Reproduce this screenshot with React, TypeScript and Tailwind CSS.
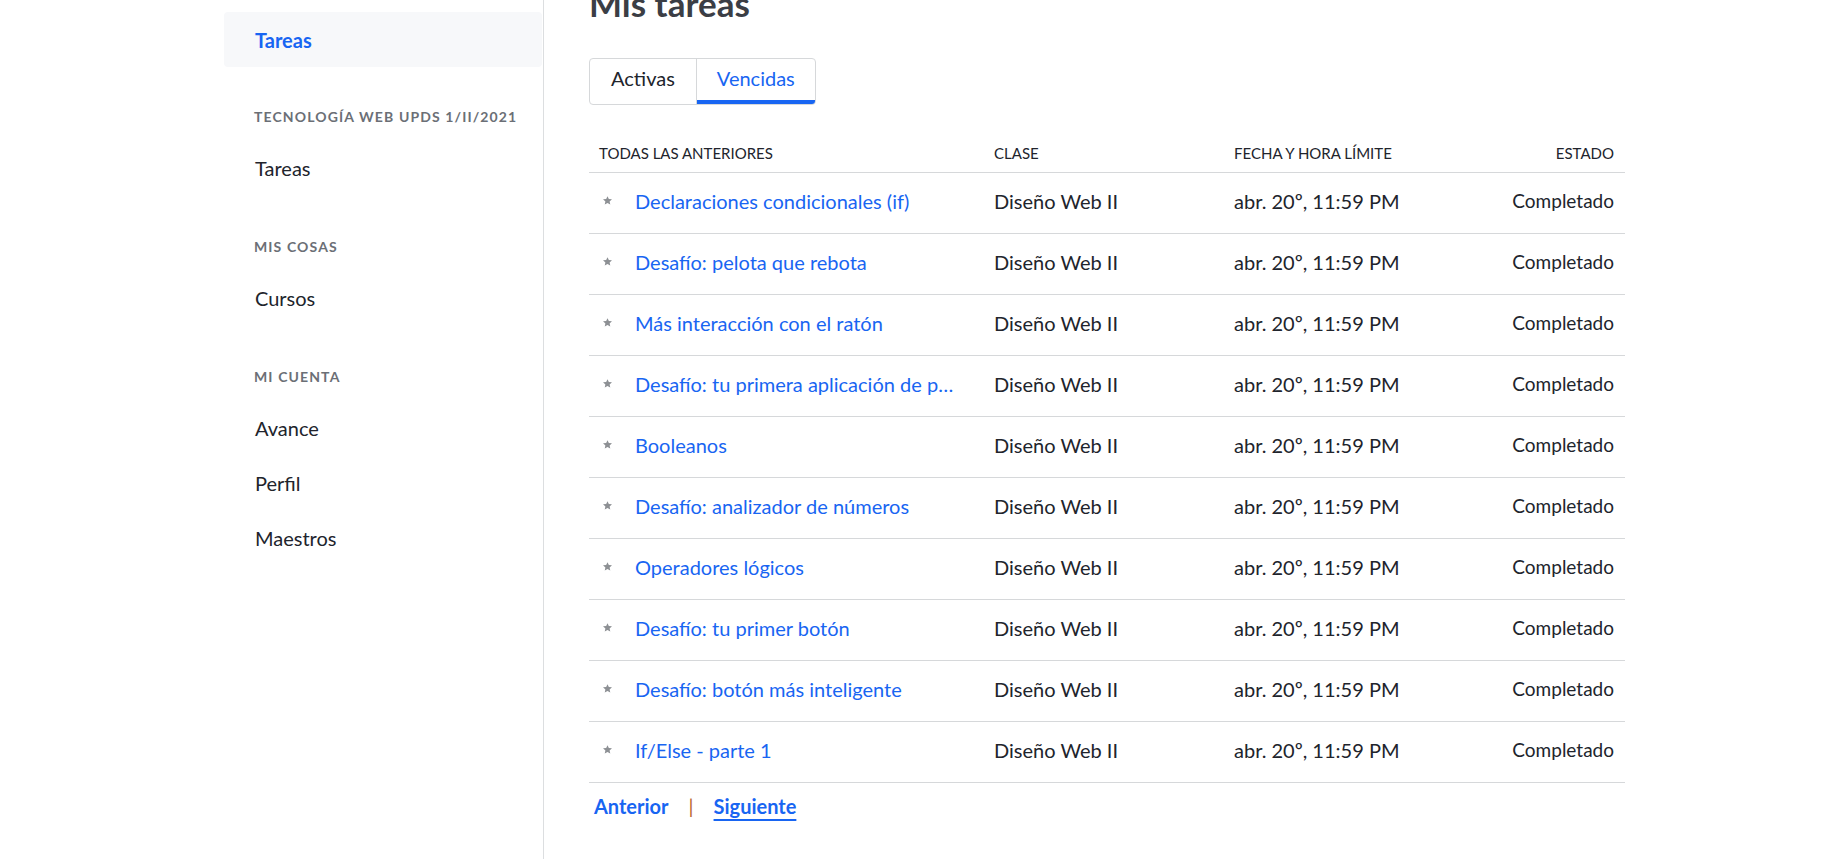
import React from "react";

const tasks = [
  "Declaraciones condicionales (if)",
  "Desafío: pelota que rebota",
  "Más interacción con el ratón",
  "Desafío: tu primera aplicación de pintura",
  "Booleanos",
  "Desafío: analizador de números",
  "Operadores lógicos",
  "Desafío: tu primer botón",
  "Desafío: botón más inteligente",
  "If/Else - parte 1",
];

const Star = () => (
  <svg width="11" height="11" viewBox="0 0 24 24" className="shrink-0">
    <path
      d="M12 2.5l2.9 6.3 6.9.7-5.2 4.6 1.5 6.8L12 17.4l-6.1 3.5 1.5-6.8-5.2-4.6 6.9-.7z"
      fill="#8d9094"
    />
  </svg>
);

const SectionHeader = ({ children }: { children: React.ReactNode }) => (
  <div className="mt-[43px] mb-[16px] h-[16px] flex items-center pl-[30px] text-[14px] font-bold tracking-[0.08em] text-[#6b6f76] uppercase">
    {children}
  </div>
);

const NavItem = ({ children, active = false }: { children: React.ReactNode; active?: boolean }) => (
  <div
    className={`h-[55px] flex items-center pl-[31px] text-[20px] rounded-[4px] ${
      active ? "bg-[#f7f8fa] text-[#1865f2] font-bold" : "text-[#21242c]"
    }`}
  >
    {children}
  </div>
);

export default function App() {
  return (
    <div
      className="w-full h-[859px] overflow-hidden bg-white flex text-[#21242c]"
      style={{ fontFamily: "Lato, 'Open Sans', sans-serif" }}
    >
      {/* Sidebar */}
      <aside className="w-[544px] shrink-0 border-r border-[#dcdee0] pl-[224px] pr-[1px]">
        <div className="mt-[12px] mb-[-2px]">
          <NavItem active>Tareas</NavItem>
        </div>
        <SectionHeader>Tecnología Web UPDS 1/II/2021</SectionHeader>
        <NavItem>Tareas</NavItem>
        <SectionHeader>Mis cosas</SectionHeader>
        <NavItem>Cursos</NavItem>
        <SectionHeader>Mi cuenta</SectionHeader>
        <NavItem>Avance</NavItem>
        <NavItem>Perfil</NavItem>
        <NavItem>Maestros</NavItem>
      </aside>

      {/* Main */}
      <main className="flex-1 pl-[45px]">
        <h1 className="-mt-[18px] text-[35px] leading-[43px] font-bold text-[#3b3e45]">Mis tareas</h1>

        <div className="mt-[33px] inline-flex h-[47px] border border-[#d6d8da] rounded-[4px] overflow-hidden">
          <div className="h-full flex items-center px-[21px] pb-[7px] text-[20px] text-[#21242c] border-r border-[#d6d8da]">
            Activas
          </div>
          <div className="h-full flex items-center px-[20px] pb-[3px] text-[20px] text-[#1865f2] border-b-[4px] border-b-[#1865f2]">
            Vencidas
          </div>
        </div>

        <div className="mt-[40px] w-[1036px]">
          <div className="grid grid-cols-[395px_240px_1fr_auto] pb-[11px] border-b border-[#d6d8da] text-[15px] leading-[16px] text-[#21242c] uppercase">
            <div className="pl-[10px]">Todas las anteriores</div>
            <div className="pl-[10px]">Clase</div>
            <div className="pl-[10px]">Fecha y hora límite</div>
            <div className="pr-[11px] text-right">Estado</div>
          </div>

          {tasks.map((t) => (
            <div
              key={t}
              className="grid grid-cols-[395px_240px_1fr_auto] h-[61px] items-center border-b border-[#d6d8da] text-[20px] leading-[30px] pb-[5px]"
            >
              <div className="flex items-center pl-[13px] gap-[22px] pr-[29px] min-w-0">
                <Star />
                <span className="text-[#1865f2] truncate">{t}</span>
              </div>
              <div className="pl-[10px]">Diseño Web II</div>
              <div className="pl-[10px]">abr. 20º, 11:59 PM</div>
              <div className="pr-[11px] text-right text-[19px] leading-[30px]">Completado</div>
            </div>
          ))}

          <div className="flex items-center mt-[8px] text-[20px] font-bold">
            <span className="pl-[5px] text-[#1865f2]">Anterior</span>
            <span className="mx-[20px] text-[#b8652b] font-normal">|</span>
            <span className="text-[#1865f2] underline decoration-2 underline-offset-[5px]">Siguiente</span>
          </div>
        </div>
      </main>
    </div>
  );
}
